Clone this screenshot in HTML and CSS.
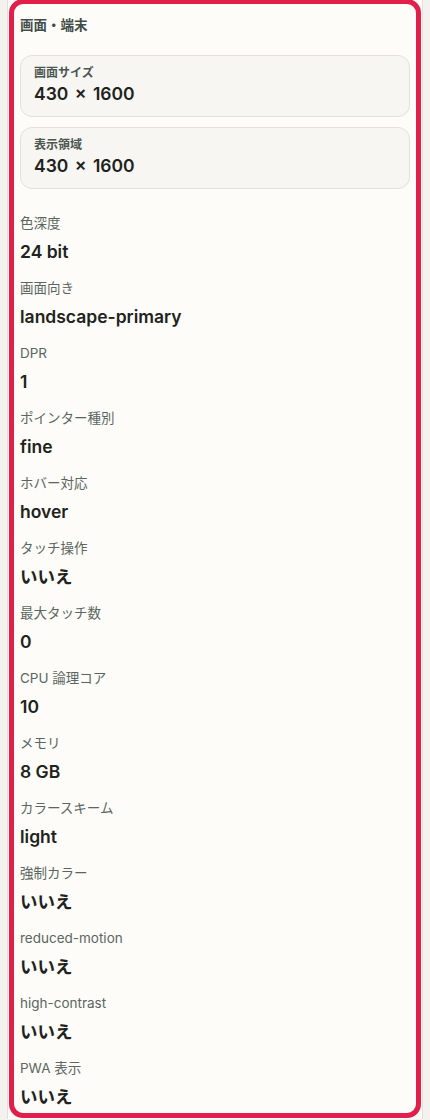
FILE: index.html
```html
<!DOCTYPE html>
<html lang="ja">
<head>
  <meta charset="UTF-8">
  <title>画面・端末</title>

  <!-- 画面・端末の情報パネル -->
  <link rel="stylesheet" href="styles.css">
</head>
<body>

  <div class="frame">
    <section class="panel">
      <h3 class="panel-title">画面・端末</h3>

      <!-- サイズ系はカードで表示 -->
      <div class="card">
        <div class="card-label">画面サイズ</div>
        <div class="card-value">430 × 1600</div>
      </div>
      <div class="card">
        <div class="card-label">表示領域</div>
        <div class="card-value">430 × 1600</div>
      </div>

      <!-- その他の項目 -->
      <dl class="info-list">
        <div class="info-item"><dt>色深度</dt><dd>24 bit</dd></div>
        <div class="info-item"><dt>画面向き</dt><dd>landscape-primary</dd></div>
        <div class="info-item"><dt>DPR</dt><dd>1</dd></div>
        <div class="info-item"><dt>ポインター種別</dt><dd>fine</dd></div>
        <div class="info-item"><dt>ホバー対応</dt><dd>hover</dd></div>
        <div class="info-item"><dt>タッチ操作</dt><dd>いいえ</dd></div>
        <div class="info-item"><dt>最大タッチ数</dt><dd>0</dd></div>
        <div class="info-item"><dt>CPU 論理コア</dt><dd>10</dd></div>
        <div class="info-item"><dt>メモリ</dt><dd>8 GB</dd></div>
        <div class="info-item"><dt>カラースキーム</dt><dd>light</dd></div>
        <div class="info-item"><dt>強制カラー</dt><dd>いいえ</dd></div>
        <div class="info-item"><dt>reduced-motion</dt><dd>いいえ</dd></div>
        <div class="info-item"><dt>high-contrast</dt><dd>いいえ</dd></div>
        <div class="info-item"><dt>PWA 表示</dt><dd>いいえ</dd></div>
      </dl>
    </section>
  </div>

</body>
</html>
```

FILE: styles.css
```css
/* ページ全体 */
body {
  margin: 0;
  background-color: #f3f2ee;
  font-family: Inter, "Noto Sans CJK JP", sans-serif;
  color: #1e2320;
}

/* 外枠 */
.frame {
  margin: 0 7px;
  padding: 0 1px;
  border-left: 1px solid #e2e0d9;
  border-right: 1px solid #e2e0d9;
  background-color: #fdfcf8;
  min-height: 1120px;
  box-sizing: border-box;
}

/* 強調された赤いパネル */
.panel {
  margin-top: -1px;
  border: 5px solid #e21f4b;
  border-radius: 14px;
  padding: 11px 6px 3px 6px;
}

.panel-title {
  margin: 0 0 20px;
  font-size: 13.5px;
  line-height: 20px;
  font-weight: bold;
  color: #414b47;
}

/* サイズ表示カード */
.card {
  background-color: #f7f6f2;
  border: 1px solid #e3e1da;
  border-radius: 12px;
  padding: 9px 13px 10px;
  margin-bottom: 10px;
}

.card-label {
  font-size: 12px;
  line-height: 16px;
  font-weight: bold;
  color: #4b5550;
}

.card-value {
  margin-top: 1px;
  font-size: 17.5px;
  line-height: 24px;
  font-weight: 600;
  word-spacing: 2px;
  color: #1e2320;
}

/* 項目リスト */
.info-list {
  margin: 24px 0 0;
}

.info-item {
  margin-bottom: 13px;
}

.info-item:last-child {
  margin-bottom: 0;
}

.info-item dt {
  font-size: 13.5px;
  line-height: 20px;
  color: #5b6661;
}

.info-item dd {
  margin: 6px 0 0;
  font-size: 17.5px;
  line-height: 26px;
  font-weight: 600;
  color: #1e2320;
}
```
